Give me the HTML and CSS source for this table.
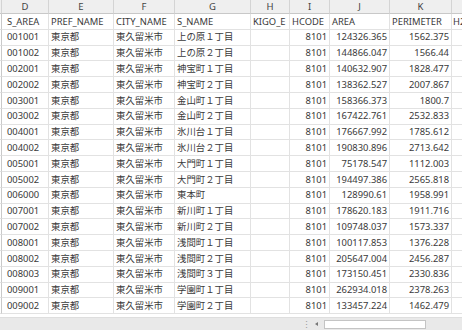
FILE: index.html
```html
<!DOCTYPE html>
<html lang="ja">
<head>
<meta charset="utf-8">
<link rel="stylesheet" href="styles.css">
</head>
<body>
<div class="app">
  <div class="sheet">
    <div class="row head">
      <div class="c edge"></div><div class="c">D</div><div class="c">E</div><div class="c">F</div><div class="c">G</div><div class="c">H</div><div class="c">I</div><div class="c">J</div><div class="c">K</div><div class="c"></div>
    </div>
    <div class="row"><div class="c edge"></div><div class="c first">S_AREA</div><div class="c">PREF_NAME</div><div class="c">CITY_NAME</div><div class="c">S_NAME</div><div class="c">KIGO_E</div><div class="c">HCODE</div><div class="c">AREA</div><div class="c">PERIMETER</div><div class="c last">H2</div></div>
    <div class="row"><div class="c edge"></div><div class="c first">001001</div><div class="c">東京都</div><div class="c">東久留米市</div><div class="c">上の原１丁目</div><div class="c"></div><div class="c n">8101</div><div class="c n">124326.365</div><div class="c n">1562.375</div><div class="c"></div></div>
    <div class="row"><div class="c edge"></div><div class="c first">001002</div><div class="c">東京都</div><div class="c">東久留米市</div><div class="c">上の原２丁目</div><div class="c"></div><div class="c n">8101</div><div class="c n">144866.047</div><div class="c n">1566.44</div><div class="c"></div></div>
    <div class="row"><div class="c edge"></div><div class="c first">002001</div><div class="c">東京都</div><div class="c">東久留米市</div><div class="c">神宝町１丁目</div><div class="c"></div><div class="c n">8101</div><div class="c n">140632.907</div><div class="c n">1828.477</div><div class="c"></div></div>
    <div class="row"><div class="c edge"></div><div class="c first">002002</div><div class="c">東京都</div><div class="c">東久留米市</div><div class="c">神宝町２丁目</div><div class="c"></div><div class="c n">8101</div><div class="c n">138362.527</div><div class="c n">2007.867</div><div class="c"></div></div>
    <div class="row"><div class="c edge"></div><div class="c first">003001</div><div class="c">東京都</div><div class="c">東久留米市</div><div class="c">金山町１丁目</div><div class="c"></div><div class="c n">8101</div><div class="c n">158366.373</div><div class="c n">1800.7</div><div class="c"></div></div>
    <div class="row"><div class="c edge"></div><div class="c first">003002</div><div class="c">東京都</div><div class="c">東久留米市</div><div class="c">金山町２丁目</div><div class="c"></div><div class="c n">8101</div><div class="c n">167422.761</div><div class="c n">2532.833</div><div class="c"></div></div>
    <div class="row"><div class="c edge"></div><div class="c first">004001</div><div class="c">東京都</div><div class="c">東久留米市</div><div class="c">氷川台１丁目</div><div class="c"></div><div class="c n">8101</div><div class="c n">176667.992</div><div class="c n">1785.612</div><div class="c"></div></div>
    <div class="row"><div class="c edge"></div><div class="c first">004002</div><div class="c">東京都</div><div class="c">東久留米市</div><div class="c">氷川台２丁目</div><div class="c"></div><div class="c n">8101</div><div class="c n">190830.896</div><div class="c n">2713.642</div><div class="c"></div></div>
    <div class="row"><div class="c edge"></div><div class="c first">005001</div><div class="c">東京都</div><div class="c">東久留米市</div><div class="c">大門町１丁目</div><div class="c"></div><div class="c n">8101</div><div class="c n">75178.547</div><div class="c n">1112.003</div><div class="c"></div></div>
    <div class="row"><div class="c edge"></div><div class="c first">005002</div><div class="c">東京都</div><div class="c">東久留米市</div><div class="c">大門町２丁目</div><div class="c"></div><div class="c n">8101</div><div class="c n">194497.386</div><div class="c n">2565.818</div><div class="c"></div></div>
    <div class="row"><div class="c edge"></div><div class="c first">006000</div><div class="c">東京都</div><div class="c">東久留米市</div><div class="c">東本町</div><div class="c"></div><div class="c n">8101</div><div class="c n">128990.61</div><div class="c n">1958.991</div><div class="c"></div></div>
    <div class="row"><div class="c edge"></div><div class="c first">007001</div><div class="c">東京都</div><div class="c">東久留米市</div><div class="c">新川町１丁目</div><div class="c"></div><div class="c n">8101</div><div class="c n">178620.183</div><div class="c n">1911.716</div><div class="c"></div></div>
    <div class="row"><div class="c edge"></div><div class="c first">007002</div><div class="c">東京都</div><div class="c">東久留米市</div><div class="c">新川町２丁目</div><div class="c"></div><div class="c n">8101</div><div class="c n">109748.037</div><div class="c n">1573.337</div><div class="c"></div></div>
    <div class="row"><div class="c edge"></div><div class="c first">008001</div><div class="c">東京都</div><div class="c">東久留米市</div><div class="c">浅間町１丁目</div><div class="c"></div><div class="c n">8101</div><div class="c n">100117.853</div><div class="c n">1376.228</div><div class="c"></div></div>
    <div class="row"><div class="c edge"></div><div class="c first">008002</div><div class="c">東京都</div><div class="c">東久留米市</div><div class="c">浅間町２丁目</div><div class="c"></div><div class="c n">8101</div><div class="c n">205647.004</div><div class="c n">2456.287</div><div class="c"></div></div>
    <div class="row"><div class="c edge"></div><div class="c first">008003</div><div class="c">東京都</div><div class="c">東久留米市</div><div class="c">浅間町３丁目</div><div class="c"></div><div class="c n">8101</div><div class="c n">173150.451</div><div class="c n">2330.836</div><div class="c"></div></div>
    <div class="row"><div class="c edge"></div><div class="c first">009001</div><div class="c">東京都</div><div class="c">東久留米市</div><div class="c">学園町１丁目</div><div class="c"></div><div class="c n">8101</div><div class="c n">262934.018</div><div class="c n">2378.263</div><div class="c"></div></div>
    <div class="row"><div class="c edge"></div><div class="c first">009002</div><div class="c">東京都</div><div class="c">東久留米市</div><div class="c">学園町２丁目</div><div class="c"></div><div class="c n">8101</div><div class="c n">133457.224</div><div class="c n">1462.479</div><div class="c"></div></div>
  </div>
  <div class="gap"></div>
  <div class="bar">
    <div class="tabs"></div>
    <div class="split">⋮</div>
    <div class="arrow"></div>
    <div class="track"></div>
  </div>
</div>
</body>
</html>
```

FILE: styles.css
```css
html, body {
  margin: 0;
  padding: 0;
  background: #ffffff;
}
body {
  width: 462px;
  height: 330px;
  overflow: hidden;
  font-family: "Noto Sans", "Noto Sans CJK JP", sans-serif;
  font-size: 9.4px;
  color: #3a3a3a;
}
.app {
  display: flex;
  flex-direction: column;
  width: 462px;
  height: 330px;
}
.sheet {
  display: flex;
  flex-direction: column;
  overflow: hidden;
}
.row {
  display: grid;
  grid-template-columns: 2px 47px 65px 61px 76px 39px 40px 60px 62px 60px;
  height: 15.8px;
}
.c {
  box-sizing: border-box;
  border-right: 1px solid #e2e2e2;
  border-bottom: 1px solid #e2e2e2;
  padding: 0 2px;
  white-space: nowrap;
  overflow: hidden;
  display: flex;
  align-items: center;
  line-height: 1;
}
.c.first {
  padding-left: 5px;
}
.c.last {
  padding-left: 1px;
}
.c.n {
  justify-content: flex-end;
  padding-right: 2px;
}
.c.edge {
  padding: 0;
  border-right-color: #c9c9c9;
}
.head {
  height: 14px;
  background: #efefef;
  color: #444444;
}
.head .c {
  justify-content: center;
  border-right-color: #d4d4d4;
  border-bottom-color: #c8c8c8;
  font-size: 9.5px;
}
.gap {
  height: 3px;
  flex: none;
}
.bar {
  flex: 1;
  display: flex;
  align-items: center;
  background: #e9e9e9;
  border-top: 1px solid #dedede;
}
.tabs {
  width: 302px;
}
.split {
  width: 8px;
  color: #9a9a9a;
  font-size: 9px;
  line-height: 1;
  text-align: center;
}
.arrow {
  width: 0;
  height: 0;
  margin-left: 5px;
  margin-right: 6px;
  border-top: 2.5px solid transparent;
  border-bottom: 2.5px solid transparent;
  border-right: 3px solid #777777;
}
.track {
  width: 102px;
  height: 9px;
  background: #ffffff;
  border: 1px solid #c4c4c4;
  box-sizing: border-box;
}
```
